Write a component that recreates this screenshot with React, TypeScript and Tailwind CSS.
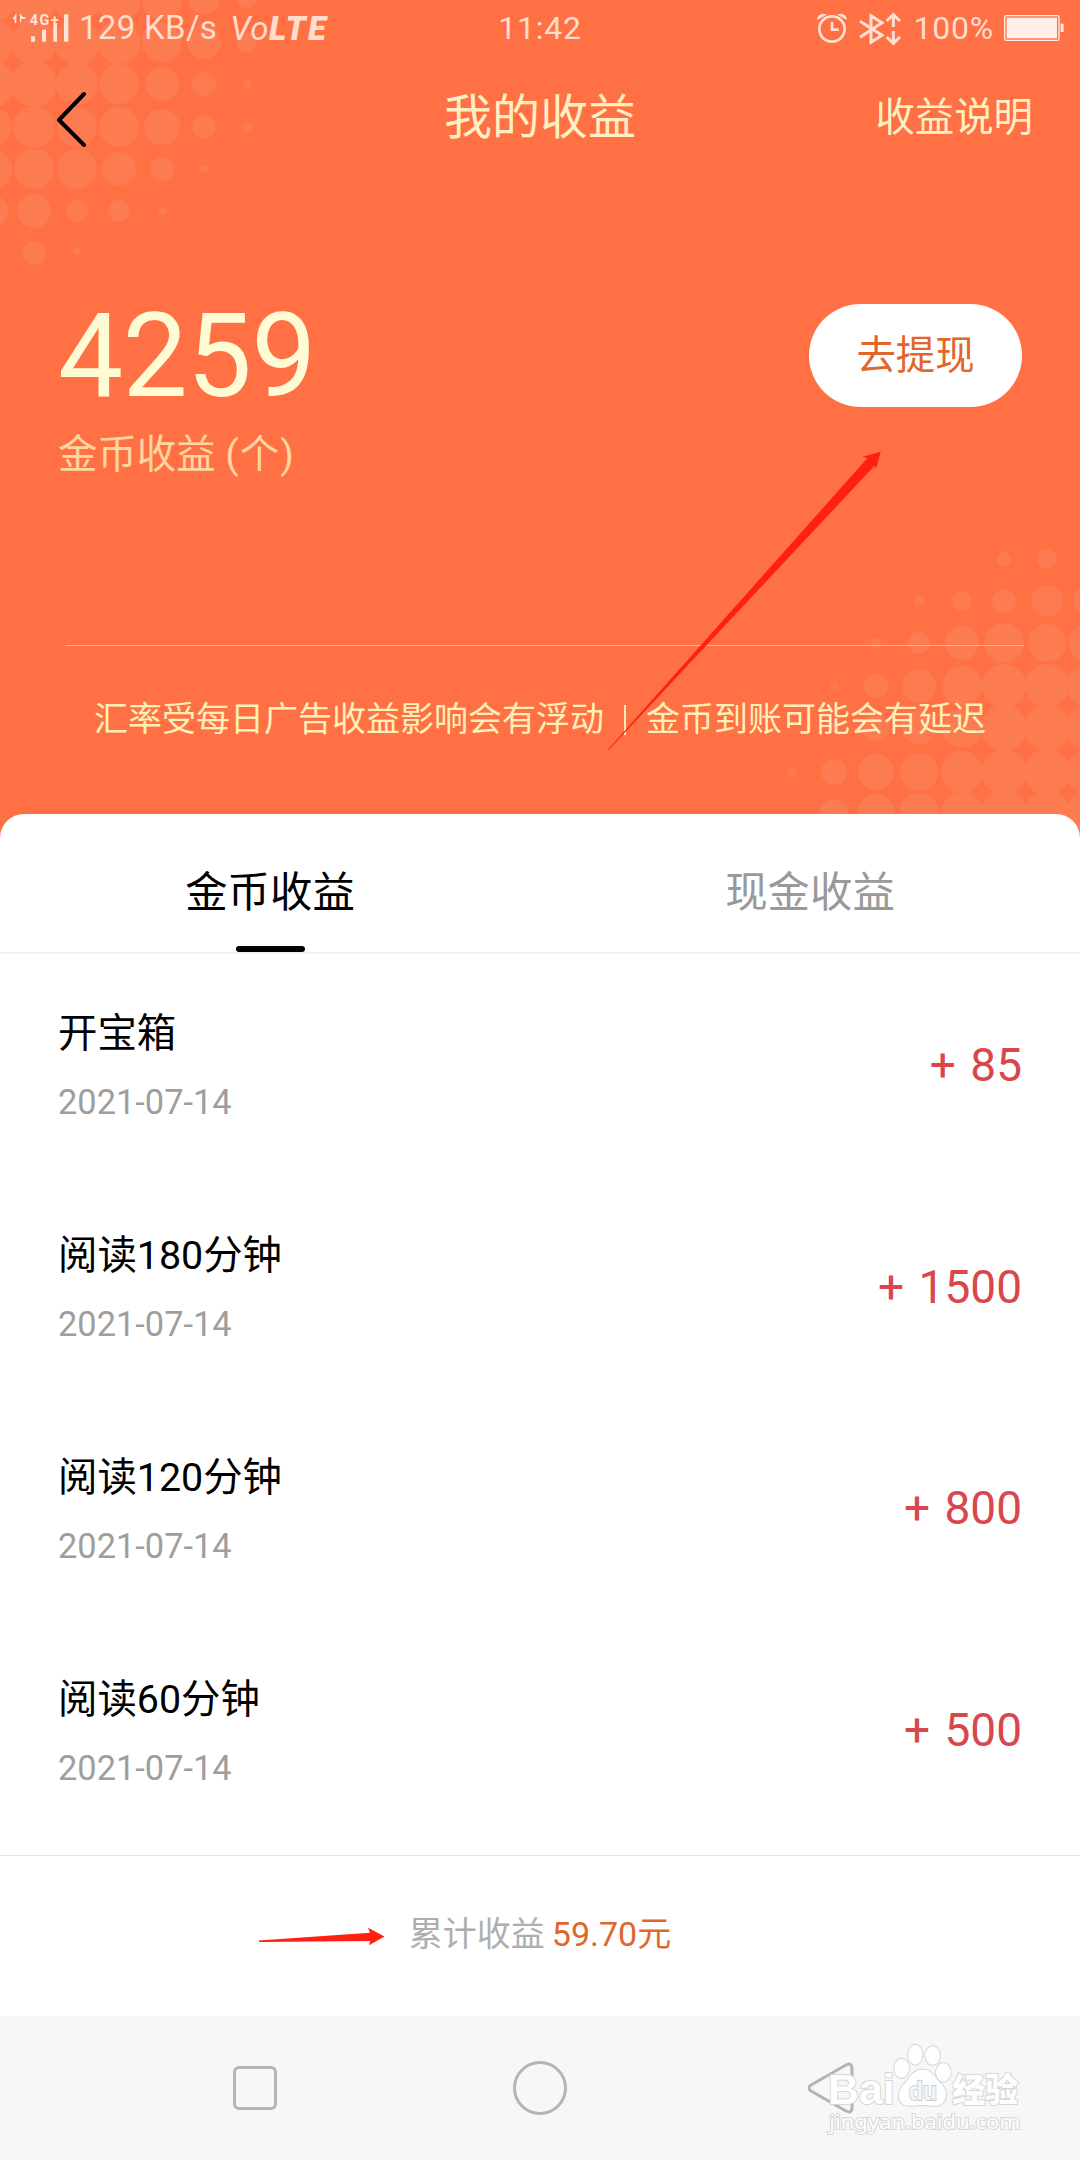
const records = [
  { title: '开宝箱', date: '2021-07-14', amount: '85' },
  { title: '阅读180分钟', date: '2021-07-14', amount: '1500' },
  { title: '阅读120分钟', date: '2021-07-14', amount: '800' },
  { title: '阅读60分钟', date: '2021-07-14', amount: '500' },
]

// [x, y, radius]
const topDots = [
  [-8, 0, 23], [34, 0, 23], [77, 0, 23], [119, 0, 22], [162, 0, 20], [204, -2, 16], [247, -3, 11],
  [-8, 42, 23], [34, 42, 23], [77, 42, 23], [119, 42, 22], [162, 42, 20], [204, 42, 17], [247, 42, 10],
  [-8, 84, 23], [34, 84, 23], [77, 84, 21], [119, 84, 20], [162, 84, 17], [204, 84, 12], [247, 84, 4],
  [-8, 127, 20], [34, 127, 21], [77, 127, 20], [119, 127, 20], [162, 127, 18], [204, 127, 12], [247, 127, 5],
  [-8, 169, 20], [34, 169, 20], [77, 169, 20], [119, 169, 17], [162, 169, 12], [204, 169, 4],
  [-8, 211, 16], [34, 211, 17], [77, 211, 11], [119, 211, 11], [162, 211, 4],
  [34, 253, 12], [77, 251, 4],
]

const bottomDots = [
  [1004, 559, 7], [1047, 559, 10],
  [919, 601, 5], [962, 601, 10], [1004, 601, 12], [1047, 601, 16], [1089, 601, 16],
  [876, 643, 5], [919, 643, 11], [962, 643, 17], [1004, 643, 20], [1047, 643, 19], [1089, 643, 20],
  [834, 686, 4], [876, 686, 12], [919, 686, 17], [962, 686, 20], [1004, 686, 22], [1047, 686, 22], [1089, 686, 22],
  [834, 728, 5], [876, 728, 13], [919, 728, 17], [962, 728, 20], [1004, 728, 23], [1047, 728, 23], [1089, 728, 23],
  [792, 772, 4], [834, 772, 13], [876, 772, 18], [919, 772, 19], [962, 772, 21], [1004, 772, 23], [1047, 772, 23], [1089, 772, 23],
  [834, 813, 14], [876, 813, 19], [919, 813, 20], [962, 813, 21], [1004, 813, 23], [1047, 813, 23], [1089, 813, 23],
]

function DotPattern() {
  return (
    <svg className="absolute inset-0 h-[840px] w-[1080px]" viewBox="0 0 1080 840">
      <g fill="#fd7b51">
        {[...topDots, ...bottomDots].map(([x, y, r]) => (
          <circle key={`${x}-${y}`} cx={x} cy={y} r={r} />
        ))}
      </g>
    </svg>
  )
}

function SignalIcon() {
  return (
    <svg className="h-[56px] w-[70px]" viewBox="0 0 210 168" fill="#ffe4d6">
      <path d="M38 53 49 37V66H44V55H38ZM60 37V66L64 61V54H76V49H69Z" />
      <text x="89" y="71" fontSize="43" fontWeight="700" fontFamily="Roboto, sans-serif" textLength="87">4G+</text>
      <rect x="93" y="106" width="12" height="16" />
      <rect x="126" y="86" width="12" height="36" />
      <rect x="160" y="66" width="11" height="56" />
      <rect x="192" y="40" width="13" height="82" />
    </svg>
  )
}

function AlarmIcon() {
  return (
    <svg className="h-[32px] w-[32px]" viewBox="0 0 96 96" fill="none" stroke="#ffe0d3" strokeWidth="8">
      <circle cx="48" cy="51" r="38" />
      <path d="M48 30V53H68" />
      <path d="M3 24C4 7 20 1 32 8ZM93 24C92 7 76 1 64 8Z" fill="#ffe0d3" stroke="none" />
    </svg>
  )
}

function BluetoothIcon() {
  return (
    <svg className="h-[34px] w-[42px]" viewBox="0 0 126 102" fill="none" stroke="#ffe0d3" strokeWidth="9">
      <path d="M3 28 69 70 36 91V11L69 32 3 76" />
      <path d="M103 45V10M83 27 103 8 123 27M103 57V92M83 75 103 94 123 75" />
    </svg>
  )
}

function BatteryIcon() {
  return (
    <svg className="h-[26px] w-[60px]" viewBox="0 0 180 78" fill="#ffefe8">
      <rect x="2" y="2" width="163" height="74" rx="5" fill="none" stroke="#ffefe8" strokeWidth="4" />
      <rect x="8" y="8" width="151" height="62" />
      <rect x="170" y="26" width="9" height="25" />
    </svg>
  )
}

function Watermark() {
  return (
    <svg className="absolute bottom-0 right-0 h-[170px] w-[320px]" viewBox="0 0 960 510">
      <g fill="#fefefe" stroke="#d6d6d6" strokeWidth="6" paintOrder="stroke">
        <text x="204" y="343" fontSize="130" fontWeight="700" fontFamily="'Liberation Sans', sans-serif" textLength="200" lengthAdjust="spacingAndGlyphs">Bai</text>
        <ellipse cx="425" cy="235" rx="22" ry="29" />
        <ellipse cx="466" cy="194" rx="21" ry="30" />
        <ellipse cx="518" cy="197" rx="22" ry="28" />
        <ellipse cx="550" cy="247" rx="22" ry="28" />
        <path d="M487 239C517 239 525 262 541 279C562 298 563 325 549 339C535 353 510 345 487 345C464 345 439 353 425 339C411 325 414 298 435 279C449 264 457 239 487 239Z" />
        <text x="447" y="331" fontSize="80" fontWeight="700" fontFamily="'Liberation Sans', sans-serif" fill="#f4f4f4" stroke="#cccccc" textLength="84" lengthAdjust="spacingAndGlyphs">du</text>
        <text x="577" y="335" fontSize="100" fontWeight="900" fontFamily="'Noto Sans CJK SC', sans-serif" textLength="197" lengthAdjust="spacingAndGlyphs">经验</text>
        <text x="208" y="418" fontSize="60" fontFamily="'Noto Sans', sans-serif" textLength="572" lengthAdjust="spacingAndGlyphs">jingyan.baidu.com</text>
      </g>
    </svg>
  )
}

export default function App() {
  return (
    <div className="relative flex h-[2160px] w-[1080px] flex-col overflow-hidden bg-[#ff7045] font-[Roboto,'Noto_Sans_CJK_SC',sans-serif]">
      <DotPattern />

      {/* Status bar */}
      <div className="relative grid h-[56px] grid-cols-[1fr_auto_1fr] items-center text-[33px] leading-[56px] text-[#ffdccb]">
        <div className="flex items-center">
          <SignalIcon />
          <span className="ml-[9px] pb-[2px] tracking-[0.3px]">129 KB/s</span>
          <span className="ml-[13px] text-[33px] italic tracking-[0.5px]">
            Vo<span className="font-black tracking-[2.4px]">LTE</span>
          </span>
        </div>
        <span className="pb-[2px] text-[32px] tracking-[0.8px]">11:42</span>
        <div className="flex items-center justify-end pr-[16px]">
          <span className="pb-[2px]">
            <AlarmIcon />
          </span>
          <span className="w-[11px]" />
          <BluetoothIcon />
          <span className="ml-[12px] pb-[2px] text-[32px] tracking-[0.8px]">100%</span>
          <span className="ml-[10px] pb-[2px]">
            <BatteryIcon />
          </span>
        </div>
      </div>

      {/* Nav */}
      <div className="relative grid h-[124px] grid-cols-[1fr_auto_1fr] items-center text-[#ffefc1]">
        <svg className="ml-[56px] mt-[2px] h-[56px] w-[32px]" viewBox="0 0 32 56" fill="none" stroke="#000" strokeWidth="4" strokeLinecap="round" strokeLinejoin="round">
          <path d="M28 3 3 29 28 54" />
        </svg>
        <h1 className="text-[48px] leading-[64px]">我的收益</h1>
        <span className="pr-[47px] text-right text-[39.4px] leading-[60px]">收益说明</span>
      </div>

      {/* Balance */}
      <div className="relative flex h-[465px] items-start justify-between px-[58px] pt-[120px]">
        <div>
          <div className="text-[116px] leading-[113px] tracking-[-0.8px] text-[#fffbd5]">4259</div>
          <div className="mt-[12px] text-[39.4px] leading-[60px] text-[#ffd5a0]">
            金币收益 (<span className="mx-px">个</span>)
          </div>
        </div>
        <button className="mt-[4px] h-[103px] w-[213px] rounded-full bg-white pt-px text-[39.4px] text-[#e0662c]">去提现</button>
      </div>
      <div className="relative mx-[56px] h-px ml-[65px] bg-[#ffb480]" />
      <div className="relative flex h-[168px] items-start justify-center pt-[43px] text-[34px] leading-[60px] text-[#ffefb8]">
        <span>汇率受每日广告收益影响会有浮动</span>
        <span className="mx-[20px] mt-[16px] h-[30px] w-[2px] bg-[#ffefb8]" />
        <span>金币到账可能会有延迟</span>
      </div>

      {/* Earnings */}
      <div className="relative flex flex-1 flex-col rounded-t-[24px] bg-white">
        <div className="flex h-[140px] border-b-2 border-[#f2f2f2] text-[42.4px] leading-[60px]">
          <div className="flex flex-1 flex-col items-center justify-between pt-[49px] text-black">
            金币收益
            <span className="h-[6px] w-[69px] rounded-full bg-black" />
          </div>
          <div className="flex-1 pt-[49px] text-center text-[#999]">现金收益</div>
        </div>

        <div className="h-[901px]">
          {records.map((r) => (
            <div key={r.title} className="flex h-[221.8px] items-center justify-between px-[58px]">
              <div className="pt-[6px]">
                <div className="text-[39.4px] leading-[69px] text-black">{r.title}</div>
                <div className="text-[34.4px] leading-[68px] text-[#9e9e9e]">{r.date}</div>
              </div>
              <div className="text-[46px] leading-[68px] text-[#d8474c] [word-spacing:3px]">+ {r.amount}</div>
            </div>
          ))}
        </div>

        <div className="flex h-[161px] items-center justify-center gap-[7px] border-t border-[#e4e4e4] pb-[3px] text-[34px] text-[#aeaeae]">
          <span>累计收益</span>
          <span className="text-[#e0662c]">59.70元</span>
        </div>

        {/* System navigation */}
        <div className="flex flex-1 items-center bg-[#f7f7f7]">
          <div className="ml-[233px] h-[44px] w-[44px] rounded-[6px] border-[3px] border-[#b4b4b4]" />
          <div className="ml-[236px] h-[54px] w-[54px] rounded-full border-[3px] border-[#b4b4b4]" />
          <svg className="ml-[241px] h-[54px] w-[48px]" viewBox="0 0 48 54" fill="none" stroke="#b4b4b4" strokeWidth="3" strokeLinejoin="round">
            <path d="M3 24 38 4Q44 1 44 8V46Q44 53 38 50L3 30Q-1 27 3 24Z" />
          </svg>
        </div>
      </div>

      {/* Pointer arrows */}
      <svg className="absolute inset-0 h-[2160px] w-[1080px]" viewBox="0 0 1080 2160" fill="#ff2012">
        <path d="M607.6 750 867.5 458 862.7 456.7 880.7 451.7 876 469 874.7 465.5 608.6 750Z" />
        <path d="M259 1940.4 370 1932.7 368 1927.7 384.5 1936.5 369 1945.3 370.3 1941 259 1942Z" />
      </svg>
      <Watermark />
    </div>
  )
}
